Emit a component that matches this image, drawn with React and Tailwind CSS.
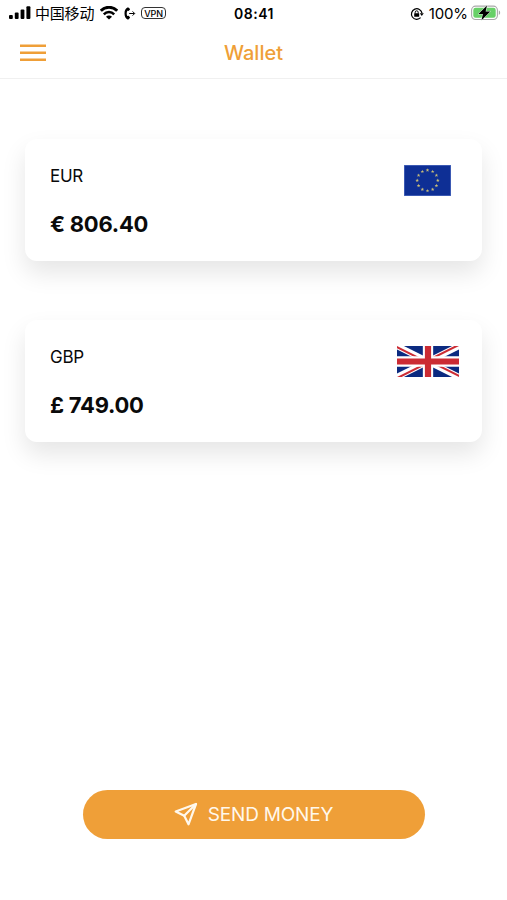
const accounts = [
  { code: "EUR", amount: "€ 806.40", Flag: EuFlag },
  { code: "GBP", amount: "£ 749.00", Flag: UkFlag },
];

/* flags */
function EuFlag() {
  const stars = Array.from({ length: 12 }, (_, i) => {
    const a = (i * Math.PI) / 6;
    return { x: 23.5 + 10.3 * Math.sin(a), y: 15.5 - 10.3 * Math.cos(a) };
  });
  return (
    <svg viewBox="0 0 47 31" className="mr-2 h-[31px] w-[47px]">
      <rect width="47" height="31" fill="#4f6cc0" />
      <rect x=".7" y=".7" width="45.6" height="29.6" fill="#0e2f95" />
      {stars.map((s, i) => (
        <path
          key={i}
          transform={`translate(${s.x} ${s.y}) scale(1.9)`}
          d="M0-1 .25-.33.95-.31.39.12.59.81 0 .4-.59.81-.39.12-.95-.31-.25-.33z"
          fill="#c9bd78"
        />
      ))}
    </svg>
  );
}

function UkFlag() {
  return (
    <svg viewBox="0 0 60 30" preserveAspectRatio="none" className="h-[31px] w-[62px]">
      <clipPath id="uk">
        <path d="M30 15h30v15zv15H0zH0V0zV0h30z" />
      </clipPath>
      <rect width="60" height="30" fill="#0b2a80" />
      <path d="M0 0l60 30M60 0L0 30" stroke="#fff" strokeWidth="6" />
      <path d="M0 0l60 30M60 0L0 30" clipPath="url(#uk)" stroke="#cb2b33" strokeWidth="4" />
      <path d="M30 0v30M0 15h60" stroke="#fff" strokeWidth="10" />
      <path d="M30 0v30M0 15h60" stroke="#cb2b33" strokeWidth="6" />
    </svg>
  );
}

/* status bar icons */
function Signal() {
  return (
    <svg viewBox="0 0 22 14" className="h-[14px] w-[22px]">
      <rect x="0" y="9" width="3.8" height="4" rx="1" />
      <rect x="5.8" y="6.6" width="3.8" height="6.4" rx="1" />
      <rect x="11.6" y="3.6" width="3.8" height="9.4" rx="1" />
      <rect x="17.4" y="0.3" width="4" height="12.7" rx="1" />
    </svg>
  );
}

function Wifi() {
  return (
    <svg viewBox="0 0 18 14" fill="none" stroke="#000" className="h-[14px] w-[18px]">
      <path d="M.8 4.700a11.500 11.500 0 0 1 16.400 0" strokeWidth="2.900" />
      <path d="M3.800 8.300a7.300 7.300 0 0 1 10.400 0" strokeWidth="2.500" />
      <path d="M9 13.600 6 10.700a4.200 4.200 0 0 1 6 0z" fill="#000" stroke="none" />
    </svg>
  );
}

function CallForward() {
  return (
    <svg viewBox="0 0 12 13" className="h-[13px] w-[12px]">
      <path d="M3.4.6C1.5 1.5.5 3.6.5 6.4s1 5 3 6c.5.2.9.1 1.2-.2l1.1-1.1c.3-.3.3-.7 0-1l-1-1c-.3-.3-.6-.3-1-.1l-.4.1C2.9 8.400 2.700 7.500 2.700 6.400s.2-1.900.7-2.700l.4.100c.4.200.7.200 1-.1l1-1c.3-.3.3-.7 0-1L4.700.7C4.400.4 3.900.3 3.400.6z" />
      <path d="M5.200 6.500h5.200M8.600 4.400l2.100 2.100-2.100 2.100" fill="none" stroke="#000" strokeWidth="1" />
    </svg>
  );
}

function RotationLock() {
  return (
    <svg viewBox="0 0 14 14" fill="none" stroke="#000" className="h-[14px] w-[14px]">
      <path d="M10.600 10.700A5.300 5.300 0 1 1 12 6.200" strokeWidth="1.200" />
      <path d="M9.800 6.300h4L11.800 9z" fill="#000" stroke="none" />
      <rect x="4.200" y="6.200" width="5" height="3.600" rx=".5" fill="#000" stroke="none" />
      <path d="M5.200 6.500V5.300a1.500 1.500 0 0 1 3 0v1.200" strokeWidth="1" />
    </svg>
  );
}

function Battery() {
  return (
    <svg viewBox="0 0 30 16" className="-mt-px h-[16px] w-[30px]">
      <rect x=".6" y="1.100" width="25.800" height="13.400" rx="4" fill="#fff" stroke="#a9a9a9" strokeWidth="1.100" />
      <rect x="2.300" y="2.800" width="22.400" height="10" rx="2.300" fill="#68d068" />
      <path d="M27.800 5.600c1.800.6 1.800 3.800 0 4.400z" fill="#a9a9a9" />
      <path
        d="M16 .6 7.400 8.900h4.500L10.500 15.200l8.800-8.700h-4.700z"
        stroke="#e8f8e8" strokeWidth="1" paintOrder="stroke" strokeLinejoin="round"
      />
    </svg>
  );
}

function MenuIcon() {
  return (
    <svg viewBox="0 0 26 18" className="h-[18px] w-[26px]" stroke="#ef9f38" strokeWidth="2.400">
      <path d="M0 1.700h26M0 8.700h26M0 15.700h26" />
    </svg>
  );
}

function SendIcon() {
  return (
    <svg
      viewBox="0 0 24 24" fill="none" stroke="currentColor" strokeWidth="2.200"
      strokeLinejoin="round" strokeLinecap="round" className="-mt-px h-[24px] w-[24px]"
    >
      <path d="M22 2 1.700 9.500l8.500 4.300L14.500 22.300z" />
      <path d="M22 2 10.200 13.800" />
    </svg>
  );
}

function StatusBar() {
  return (
    <div className="grid h-[27px] grid-cols-[1fr_auto_1fr] items-center pl-[9px] pr-[6px] text-black">
      <div className="-mt-px flex items-center">
        <Signal />
        <span className="-mt-px ml-[4px] font-['Noto_Sans_CJK_SC',sans-serif] text-[15px] leading-none tracking-[-0.2px]">
          中国移动
        </span>
        <span className="ml-[6px]"><Wifi /></span>
        <span className="ml-[6px]"><CallForward /></span>
        <span className="ml-[5px] flex h-[12px] w-[25px] items-center justify-center rounded-[4px] border border-[#333] pt-px text-[9px] font-medium leading-none">
          VPN
        </span>
      </div>
      <span className="mr-[2px] text-[14px] font-semibold leading-none tracking-[0.5px]">08:41</span>
      <div className="flex items-center justify-end">
        <RotationLock />
        <span className="ml-[5px] mr-[3px] text-[15px] leading-none tracking-[-0.1px]">100%</span>
        <Battery />
      </div>
    </div>
  );
}

function AccountCard({ code, amount, Flag }) {
  return (
    <div className="flex h-[122px] items-start justify-between rounded-[12px] bg-white pl-[25px] pr-[23px] pt-[25.500px] shadow-[0_12px_24px_rgba(0,0,0,0.1)]">
      <div>
        <p className="text-[17px] leading-[22px] tracking-[-0.3px]">{code}</p>
        <p className="mt-[23px] text-[22px] font-bold leading-[28px] tracking-[-0.25px]">{amount}</p>
      </div>
      <Flag />
    </div>
  );
}

export default function App() {
  return (
    <div className="flex h-[900px] w-full flex-col bg-white font-[Inter,sans-serif] text-[#0a0a0a]">
      <StatusBar />

      {/* nav bar */}
      <header className="grid h-[52px] grid-cols-[1fr_auto_1fr] items-center border-b border-[#f0f0f0] pl-5 pr-5">
        <button aria-label="Menu" className="w-[26px]">
          <MenuIcon />
        </button>
        <h1 className="text-[20px] font-medium text-[#ef9f38]">Wallet</h1>
      </header>

      <main className="flex flex-1 flex-col gap-[59px] px-[25px] pt-[60px]">
        {accounts.map((a) => (
          <AccountCard key={a.code} {...a} />
        ))}
      </main>

      <footer className="flex justify-center pb-[61px]">
        <button className="flex h-[49px] w-[342px] items-center justify-center gap-[10px] rounded-full bg-[#ef9f38] text-[19px] tracking-[-0.2px] text-[#fff8ec]">
          <SendIcon />
          <span className="pt-px">SEND MONEY</span>
        </button>
      </footer>
    </div>
  );
}
